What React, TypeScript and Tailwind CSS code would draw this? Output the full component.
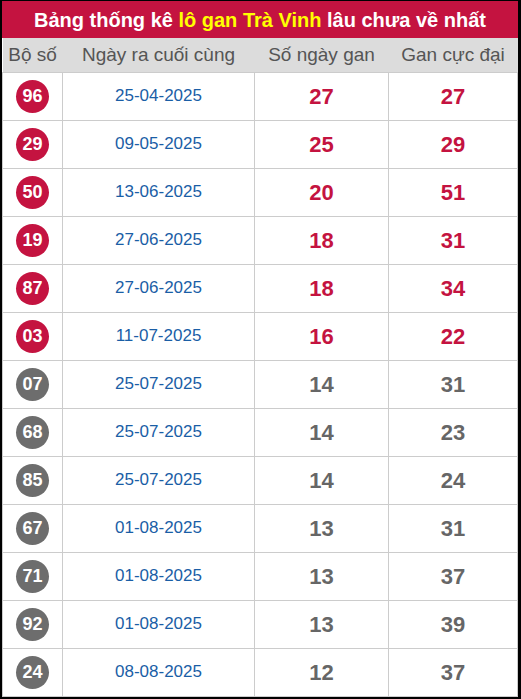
import React from "react"

type Row = { so: string; ngay: string; gan: number; max: number; hot: boolean }

const rows: Row[] = [
  { so: "96", ngay: "25-04-2025", gan: 27, max: 27, hot: true },
  { so: "29", ngay: "09-05-2025", gan: 25, max: 29, hot: true },
  { so: "50", ngay: "13-06-2025", gan: 20, max: 51, hot: true },
  { so: "19", ngay: "27-06-2025", gan: 18, max: 31, hot: true },
  { so: "87", ngay: "27-06-2025", gan: 18, max: 34, hot: true },
  { so: "03", ngay: "11-07-2025", gan: 16, max: 22, hot: true },
  { so: "07", ngay: "25-07-2025", gan: 14, max: 31, hot: false },
  { so: "68", ngay: "25-07-2025", gan: 14, max: 23, hot: false },
  { so: "85", ngay: "25-07-2025", gan: 14, max: 24, hot: false },
  { so: "67", ngay: "01-08-2025", gan: 13, max: 31, hot: false },
  { so: "71", ngay: "01-08-2025", gan: 13, max: 37, hot: false },
  { so: "92", ngay: "01-08-2025", gan: 13, max: 39, hot: false },
  { so: "24", ngay: "08-08-2025", gan: 12, max: 37, hot: false },
]

export default function App() {
  return (
    <div className="w-[521px] h-[699px] bg-black pl-[2px] pt-[1px] overflow-hidden font-['Liberation_Sans',Arial,sans-serif]">
      <div className="w-[516px] bg-white">
        <div className="h-[37px] bg-[#c41340] flex items-center justify-center text-white font-bold text-[20px]">
          Bảng thống kê&nbsp;<span className="text-[#ffff00]">lô gan Trà Vinh</span>&nbsp;lâu chưa về nhất
        </div>
        <table className="w-full border-collapse table-fixed">
          <colgroup>
            <col className="w-[60px]" />
            <col className="w-[192px]" />
            <col className="w-[134px]" />
            <col />
          </colgroup>
          <thead>
            <tr className="h-[34px] bg-[#dcdcdc] text-[#555] text-[19px] font-normal">
              <th className="font-normal">Bộ số</th>
              <th className="font-normal">Ngày ra cuối cùng</th>
              <th className="font-normal">Số ngày gan</th>
              <th className="font-normal">Gan cực đại</th>
            </tr>
          </thead>
          <tbody>
            {rows.map((r) => (
              <tr key={r.so + r.ngay} className="h-[48px] border border-[#cccccc]">
                <td className="border border-[#cccccc] p-0">
                  <div className="flex justify-center">
                    <span
                      className={`w-[33px] h-[33px] rounded-full flex items-center justify-center text-white font-bold text-[18px] ${
                        r.hot ? "bg-[#c41340]" : "bg-[#6d6d6d]"
                      }`}
                    >
                      {r.so}
                    </span>
                  </div>
                </td>
                <td className="border border-[#cccccc] text-center text-[17px] text-[#1a5ea6]">{r.ngay}</td>
                <td
                  className={`border border-[#cccccc] text-center text-[22px] font-bold ${
                    r.hot ? "text-[#c41340]" : "text-[#666666]"
                  }`}
                >
                  {r.gan}
                </td>
                <td
                  className={`border border-[#cccccc] text-center text-[22px] font-bold ${
                    r.hot ? "text-[#c41340]" : "text-[#666666]"
                  }`}
                >
                  {r.max}
                </td>
              </tr>
            ))}
          </tbody>
        </table>
      </div>
    </div>
  )
}
